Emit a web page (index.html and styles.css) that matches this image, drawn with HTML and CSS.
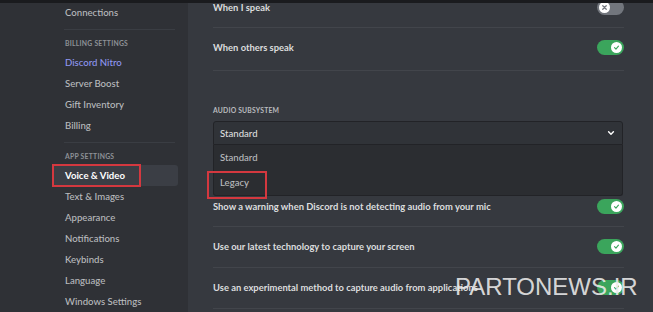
FILE: index.html
```html
<!DOCTYPE html>
<html lang="en">
<head>
<meta charset="utf-8">
<title>Voice &amp; Video</title>
<link rel="stylesheet" href="styles.css">
</head>
<body>
<div class="titlebar"></div>
<div class="app">
  <nav class="sidebar">
    <div class="nav-item nav-item--first">Connections</div>
    <div class="nav-sep"></div>
    <div class="nav-header">Billing Settings</div>
    <div class="nav-item nav-item--nitro">Discord Nitro</div>
    <div class="nav-item">Server Boost</div>
    <div class="nav-item">Gift Inventory</div>
    <div class="nav-item">Billing</div>
    <div class="nav-sep"></div>
    <div class="nav-header">App Settings</div>
    <div class="nav-item nav-item--selected"><span class="highlight highlight--nav"></span>Voice &amp; Video</div>
    <div class="nav-item">Text &amp; Images</div>
    <div class="nav-item">Appearance</div>
    <div class="nav-item">Notifications</div>
    <div class="nav-item">Keybinds</div>
    <div class="nav-item">Language</div>
    <div class="nav-item">Windows Settings</div>
  </nav>
  <main class="content">
    <div class="row row--first">
      <span class="row-label">When I speak</span>
      <span class="toggle toggle--off"><span class="knob"><svg viewBox="0 0 10 10" width="7" height="7"><path d="M2.5 2.5 L7.5 7.5 M7.5 2.5 L2.5 7.5" stroke="#72767d" stroke-width="1.8" stroke-linecap="round"/></svg></span></span>
    </div>
    <div class="row row--second">
      <span class="row-label">When others speak</span>
      <span class="toggle toggle--on"><span class="knob"><svg viewBox="0 0 10 10" width="7" height="7"><path d="M2.2 5.2 L4.2 7.2 L7.8 3" stroke="#3ba55c" stroke-width="1.6" fill="none" stroke-linecap="round" stroke-linejoin="round"/></svg></span></span>
    </div>

    <div class="field-label">Audio Subsystem</div>
    <div class="select">
      <span>Standard</span>
      <svg class="chevron" viewBox="0 0 10 10" width="8" height="8"><path d="M2 3.5 L5 6.5 L8 3.5" stroke="#ffffff" stroke-width="1.8" fill="none" stroke-linecap="round" stroke-linejoin="round"/></svg>
    </div>
    <div class="menu">
      <div class="option">Standard</div>
      <div class="option"><span class="highlight highlight--legacy"></span>Legacy</div>
    </div>

    <div class="row row--flush">
      <span class="row-label">Show a warning when Discord is not detecting audio from your mic</span>
      <span class="toggle toggle--on"><span class="knob"><svg viewBox="0 0 10 10" width="7" height="7"><path d="M2.2 5.2 L4.2 7.2 L7.8 3" stroke="#3ba55c" stroke-width="1.6" fill="none" stroke-linecap="round" stroke-linejoin="round"/></svg></span></span>
    </div>
    <div class="row">
      <span class="row-label">Use our latest technology to capture your screen</span>
      <span class="toggle toggle--on"><span class="knob"><svg viewBox="0 0 10 10" width="7" height="7"><path d="M2.2 5.2 L4.2 7.2 L7.8 3" stroke="#3ba55c" stroke-width="1.6" fill="none" stroke-linecap="round" stroke-linejoin="round"/></svg></span></span>
    </div>
    <div class="row">
      <span class="row-label">Use an experimental method to capture audio from applications</span>
      <span class="toggle toggle--on"><span class="knob"><svg viewBox="0 0 10 10" width="7" height="7"><path d="M2.2 5.2 L4.2 7.2 L7.8 3" stroke="#3ba55c" stroke-width="1.6" fill="none" stroke-linecap="round" stroke-linejoin="round"/></svg></span></span>
    </div>
    <div class="watermark">PARTONEWS.IR</div>
  </main>
</div>
</body>
</html>
```

FILE: styles.css
```css
* { box-sizing: border-box; }
html, body {
  margin: 0;
  padding: 0;
  width: 653px;
  height: 312px;
  overflow: hidden;
  background: #36393f;
  font-family: Lato, "Noto Sans", "Liberation Sans", sans-serif;
}
.titlebar {
  height: 3px;
  background: #1a1b1e;
}
.app {
  display: flex;
  height: 309px;
  overflow: hidden;
}
.sidebar {
  width: 188px;
  flex: none;
  background: #2f3136;
  padding-left: 52px;
  padding-right: 10px;
}
.nav-item {
  position: relative;
  height: 21px;
  line-height: 21px;
  padding-left: 13px;
  font-size: 9.6px;
  font-weight: 500;
  color: #b9bbbe;
  white-space: nowrap;
  border-radius: 3px;
}
.nav-item--first { margin-top: -1px; }
.nav-item--nitro { color: #8e96f0; }
.nav-item--selected {
  background: #3b3e45;
  color: #ffffff;
  font-weight: 700;
}
.nav-sep {
  height: 1px;
  margin: 6px 0 0 12px;
  width: 111px;
  background: #3a3d43;
}
.nav-header {
  padding: 8px 0 4px 13px;
  height: 22px;
  line-height: 10px;
  font-size: 6.8px;
  font-weight: 700;
  letter-spacing: 0.25px;
  text-transform: uppercase;
  color: #8e9297;
}
.highlight {
  position: absolute;
  border: 2px solid #d4383f;
  pointer-events: none;
}
.highlight--nav {
  left: 0;
  top: -1px;
  width: 89px;
  height: 23px;
}
.content {
  position: relative;
  flex: 1;
  padding: 0 29px 0 25px;
  overflow: hidden;
}
.row {
  display: flex;
  align-items: center;
  justify-content: space-between;
  height: 41px;
  padding: 9px 0 11px;
  border-bottom: 1px solid #42454b;
}
.row--first {
  margin-top: -6px;
  height: 31px;
  padding: 0 0 10px;
}
.row--second {
  height: 43px;
  padding: 9px 0 13px;
}
.row--flush {
  height: 31px;
  padding: 0 0 10px;
}
.row-label {
  font-size: 9.4px;
  font-weight: 700;
  color: #dcddde;
  white-space: nowrap;
}
.toggle {
  flex: none;
  position: relative;
  width: 27px;
  height: 15px;
  border-radius: 8px;
  display: flex;
  align-items: center;
  padding: 0 2px;
}
.toggle--on { background: #3ba55c; justify-content: flex-end; }
.toggle--off { background: #72767d; justify-content: flex-start; }
.knob {
  width: 11px;
  height: 11px;
  border-radius: 50%;
  background: #ffffff;
  display: flex;
  align-items: center;
  justify-content: center;
}
.field-label {
  margin-top: 34px;
  height: 10px;
  line-height: 10px;
  font-size: 6.8px;
  font-weight: 700;
  letter-spacing: 0.2px;
  text-transform: uppercase;
  color: #b9bbbe;
}
.select {
  margin-top: 6px;
  width: 410px;
  height: 24px;
  display: flex;
  align-items: center;
  justify-content: space-between;
  padding: 0 7px 0 6px;
  background: #303338;
  border: 1px solid #222327;
  border-radius: 3px 3px 0 0;
  font-size: 9.6px;
  font-weight: 500;
  color: #dcddde;
}
.chevron { display: block; }
.menu {
  width: 410px;
  height: 51px;
  background: #2b2d31;
  border: 1px solid #222327;
  border-top: none;
  border-radius: 0 0 3px 3px;
}
.option {
  position: relative;
  height: 25px;
  line-height: 25px;
  padding-left: 6px;
  font-size: 9.6px;
  font-weight: 500;
  color: #b9bbbe;
}
.highlight--legacy {
  left: -7px;
  top: 1px;
  width: 60px;
  height: 28px;
}
.watermark {
  position: absolute;
  left: 267px;
  top: 270px;
  font-family: "Liberation Sans", Arial, sans-serif;
  font-size: 24px;
  line-height: 28px;
  color: rgba(235, 235, 235, 0.9);
  white-space: nowrap;
}
```
